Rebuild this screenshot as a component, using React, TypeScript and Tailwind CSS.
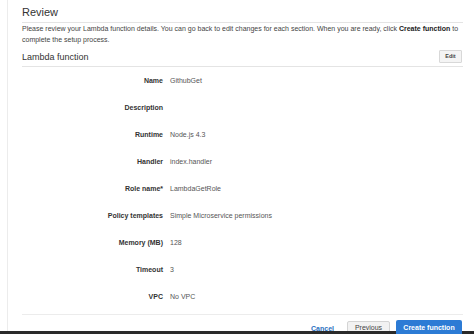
import React from "react";

const rows: [string, string][] = [
  ["Name", "GithubGet"],
  ["Description", ""],
  ["Runtime", "Node.js 4.3"],
  ["Handler", "index.handler"],
  ["Role name*", "LambdaGetRole"],
  ["Policy templates", "Simple Microservice permissions"],
  ["Memory (MB)", "128"],
  ["Timeout", "3"],
  ["VPC", "No VPC"],
];

export default function App() {
  return (
    <div
      className="relative w-[474px] h-[334px] overflow-hidden bg-white flex"
      style={{ fontFamily: '"Liberation Sans", Arial, sans-serif' }}
    >
      <div className="w-[7px] shrink-0" />
      <div className="flex-1 border-l border-[#ececec] pl-[14px] pr-[11px]">
        <div className="h-[23px] border-b border-[#e4e4e4] flex items-end pb-[3px]">
          <span className="text-[11px] leading-[14px] text-[#333]">Review</span>
        </div>
        <p className="text-[7px] leading-[11px] text-[#444]">
          Please review your Lambda function details. You can go back to edit changes for each section. When you are ready, click{" "}
          <b className="text-[#222]">Create function</b> to complete the setup process.
        </p>
        <div className="mt-[1px] h-[21px] border-b border-[#e4e4e4] flex items-center justify-between">
          <span className="text-[9px] leading-[12px] text-[#333] pt-[2px]">Lambda function</span>
          <span className="h-[13px] w-[23px] mr-[1px] border border-[#d8d8d8] bg-[#f4f4f4] rounded-[1px] flex items-center justify-center text-[5.5px] font-bold text-[#444]">
            Edit
          </span>
        </div>
        <div className="pt-[1px]">
          {rows.map(([k, v]) => (
            <div key={k} className="h-[27px] flex items-center text-[7px]">
              <span className="w-[141px] text-right font-bold text-[#333]">{k}</span>
              <span className="ml-[7px] text-[#555]">{v}</span>
            </div>
          ))}
        </div>
        <div className="mt-[3px] border-t border-[#ececec] flex items-start justify-end pt-[5px] pr-[1px]">
          <span className="mt-[4px] text-[7px] font-bold text-[#2a6fc0]">Cancel</span>
          <span className="ml-[13px] mt-[1px] h-[15px] w-[43px] border border-[#d4d4d4] bg-[#f2f2f2] rounded-[2px] flex items-center justify-center text-[7px] text-[#444]">
            Previous
          </span>
          <span className="relative z-10 ml-[6px] h-[16px] w-[66px] bg-[#2c7bd5] rounded-[2px] flex items-center justify-center text-[7px] font-bold text-white">
            Create function
          </span>
        </div>
      </div>
      <div className="absolute bottom-0 left-0 w-full h-[3px] bg-[#2a2a2a]" />
    </div>
  );
}
